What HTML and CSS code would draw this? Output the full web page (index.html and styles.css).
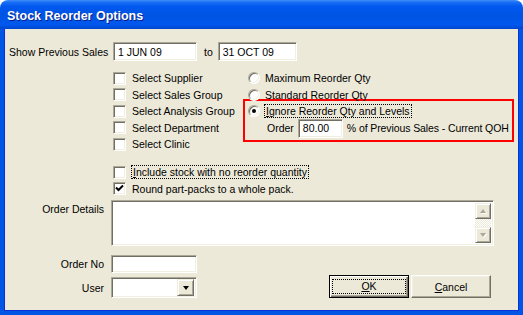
FILE: index.html
```html
<!DOCTYPE html>
<html lang="en">
<head>
  <meta charset="UTF-8">
  <title>Stock Reorder Options</title>
  <link rel="stylesheet" href="styles.css">
</head>
<body>
  <div class="window">
    <div class="titlebar">Stock Reorder Options</div>
    <div class="body">
      <div class="dates">
        <span class="lbl-sales">Show Previous Sales</span>
        <span class="field date-from">1 JUN 09</span>
        <span class="to">to</span>
        <span class="field date-to">31 OCT 09</span>
      </div>

      <div class="options">
        <div class="checks">
          <label class="opt"><span class="check"></span>Select Supplier</label>
          <label class="opt"><span class="check"></span>Select Sales Group</label>
          <label class="opt"><span class="check"></span>Select Analysis Group</label>
          <label class="opt"><span class="check"></span>Select Department</label>
          <label class="opt"><span class="check"></span>Select Clinic</label>
        </div>
        <div class="radios">
          <label class="opt"><span class="radio"></span>Maximum Reorder Qty</label>
          <label class="opt"><span class="radio"></span>Standard Reorder Qty</label>
          <div class="highlight">
            <label class="opt ignore"><span class="radio on"></span><span class="focus"><u>I</u>gnore Reorder Qty and Levels</span></label>
            <div class="order-row">
              <span>Order</span>
              <span class="field pct">80.00</span>
              <span class="pct-text">% of Previous Sales - Current QOH</span>
            </div>
          </div>
        </div>
      </div>

      <div class="extras">
        <label class="opt"><span class="check"></span><span class="focus"><u>I</u>nclude stock with no reorder quantity</span></label>
        <label class="opt"><span class="check"><svg width="9" height="9" viewBox="0 0 9 9"><path d="M1 3.5 L3.5 6 L8 1.5" stroke="#000" stroke-width="2" fill="none"/></svg></span>Round part-packs to a whole pack.</label>
      </div>

      <div class="details">
        <span class="side-lbl">Order Details</span>
        <div class="field memo">
          <div class="memo-text"></div>
          <div class="vscroll">
            <span class="sbtn"><span class="arrow up"></span></span>
            <span class="track"></span>
            <span class="sbtn"><span class="arrow down"></span></span>
          </div>
        </div>
      </div>

      <div class="bottom">
        <div class="fields">
          <div class="frow"><span class="side-lbl">Order No</span><span class="field order-no"></span></div>
          <div class="frow"><span class="side-lbl">User</span><span class="field combo"><span class="drop"><span class="arrow dark"></span></span></span></div>
        </div>
        <div class="buttons">
          <button class="btn default"><span class="focus"><u>O</u>K</span></button>
          <button class="btn"><u>C</u>ancel</button>
        </div>
      </div>
    </div>
  </div>
</body>
</html>
```

FILE: styles.css
```css
body {
  margin: 0;
  background: #fff;
  font-family: "Liberation Sans", Arial, sans-serif;
  font-size: 10.5px;
  color: #000;
  white-space: nowrap;
}
.window {
  width: 523px;
  height: 315px;
  display: flex;
  flex-direction: column;
}
.titlebar {
  height: 29px;
  box-sizing: border-box;
  padding: 3px 0 0 7px;
  display: flex;
  align-items: center;
  border-radius: 8px 8px 0 0;
  background: linear-gradient(to bottom, #3d8ef8 0%, #1a6ef5 8%, #0058ee 22%, #0054e3 55%, #0058ee 85%, #0044cc 100%);
  color: #fff;
  font-size: 12.5px;
  font-weight: bold;
  text-shadow: 1px 1px #0a1e8a;
}
.body {
  flex: 1;
  background: #ece9d8;
  border: 4px solid #0055e5;
  border-top: none;
  box-shadow: inset 1px 0 #0831d9, inset -1px 0 #0831d9, inset 0 -1px #0831d9;
  padding: 13px 0 0 5px;
}
.field {
  box-sizing: border-box;
  display: flex;
  align-items: center;
  padding-left: 4px;
  background: #fff;
  border: 1px solid;
  border-color: #aca899 #fff #fff #aca899;
  box-shadow: inset 1px 1px #716f64, inset -1px -1px #f1efe2;
}
.dates {
  display: flex;
  align-items: center;
  height: 19px;
}
.lbl-sales { width: 104px; }
.date-from { width: 84px; height: 19px; }
.to { margin: 0 5px 0 7px; }
.date-to { width: 79px; height: 19px; }

.options {
  display: flex;
  margin: 9px 0 0 104px;
}
.checks { width: 130px; }
.opt {
  display: flex;
  align-items: center;
  gap: 6px;
  height: 16.5px;
}
.check {
  box-sizing: border-box;
  width: 13px;
  height: 13px;
  flex: none;
  display: flex;
  align-items: center;
  justify-content: center;
  background: #fff;
  border: 1px solid;
  border-color: #aca899 #fff #fff #aca899;
  box-shadow: inset 1px 1px #716f64, inset -1px -1px #f1efe2;
}
.radios .opt {
  gap: 5px;
  padding-left: 5px;
}
.radio {
  box-sizing: border-box;
  width: 12px;
  height: 12px;
  flex: none;
  border-radius: 50%;
  display: flex;
  align-items: center;
  justify-content: center;
  background: #fff;
  border: 1px solid;
  border-color: #aca899 #fff #fff #aca899;
  box-shadow: inset 1px 1px #716f64, inset -1px -1px #f1efe2;
}
.radio.on::after {
  content: "";
  width: 4px;
  height: 4px;
  border-radius: 50%;
  background: #000;
}
.highlight {
  box-sizing: border-box;
  width: 271px;
  margin-top: -4px;
  padding: 2px 0;
  border: 2px solid #f00;
}
.highlight .opt { padding-left: 3px; }
.opt.ignore { height: 15px; }
.focus {
  outline: 1px dotted #000;
  padding: 0 1px;
}
.order-row {
  display: flex;
  align-items: center;
  gap: 4px;
  height: 20px;
  padding-left: 22px;
}
.pct { width: 45px; height: 19px; }
.pct-text { letter-spacing: -0.1px; }

.extras {
  margin: 11.5px 0 0 104px;
}

.details {
  display: flex;
  margin-top: 3px;
}
.side-lbl {
  width: 95px;
  margin-right: 7px;
  text-align: right;
  flex: none;
}
.details .side-lbl { padding-top: 3px; }
.memo {
  width: 383px;
  height: 46px;
  padding: 2px;
  align-items: stretch;
}
.memo-text { flex: 1; }
.vscroll {
  width: 16px;
  display: flex;
  flex-direction: column;
}
.sbtn, .drop {
  box-sizing: border-box;
  width: 16px;
  height: 16px;
  display: flex;
  align-items: center;
  justify-content: center;
  background: #ece9d8;
  border: 1px solid;
  border-color: #f1efe2 #716f64 #716f64 #f1efe2;
  box-shadow: inset 1px 1px #fff, inset -1px -1px #aca899;
}
.track {
  flex: 1;
  background: repeating-conic-gradient(#ece9d8 0 25%, #fff 0 50%) 0 0 / 2px 2px;
}
.arrow {
  width: 0;
  height: 0;
  border-left: 3.5px solid transparent;
  border-right: 3.5px solid transparent;
}
.arrow.up { border-bottom: 4px solid #aca899; filter: drop-shadow(1px 1px 0 #fff); }
.arrow.down { border-top: 4px solid #aca899; filter: drop-shadow(1px 1px 0 #fff); }
.arrow.dark { border-top: 4px solid #000; }

.bottom {
  display: flex;
  justify-content: space-between;
  align-items: flex-end;
  margin-top: 9px;
}
.frow {
  display: flex;
  align-items: center;
  margin-bottom: 4px;
}
.frow:last-child { margin-bottom: 0; }
.order-no { width: 86px; height: 18px; }
.combo {
  width: 86px;
  height: 21px;
  padding: 2px;
  justify-content: flex-end;
}
.drop { width: 17px; height: 17px; }
.buttons {
  display: flex;
  gap: 2px;
  margin-right: 28px;
}
.btn {
  box-sizing: border-box;
  width: 80px;
  height: 23px;
  font: inherit;
  color: #000;
  background: #ece9d8;
  border: 1px solid;
  border-color: #fff #716f64 #716f64 #fff;
  box-shadow: inset -1px -1px #aca899, inset 1px 1px #f1efe2;
  padding: 0;
}
.btn.default {
  border: 1px solid #000;
  box-shadow: inset 1px 1px #fff, inset -1px -1px #716f64, inset -2px -2px #aca899;
}
.btn.default .focus {
  display: inline-block;
  width: 70px;
  line-height: 13px;
}
```
